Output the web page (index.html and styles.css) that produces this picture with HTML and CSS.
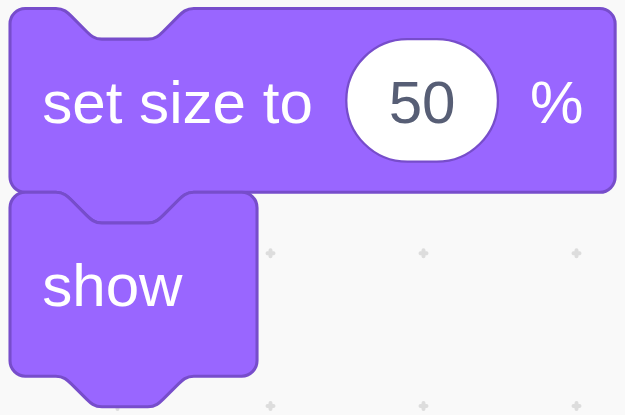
FILE: index.html
```html
<!DOCTYPE html>
<html>
<head>
<meta charset="utf-8">
<link rel="stylesheet" href="styles.css">
</head>
<body>
<div class="workspace">
  <svg class="canvas" width="625" height="415" viewBox="0 0 625 415" xmlns="http://www.w3.org/2000/svg">
    <g class="grid">
      <path d="M114.5 253.3h6M117.5 250.3v6"/>
      <path d="M267.5 253.3h6M270.5 250.3v6"/>
      <path d="M420.5 253.3h6M423.5 250.3v6"/>
      <path d="M573.5 253.3h6M576.5 250.3v6"/>
      <path d="M114.5 406h6M117.5 403v6"/>
      <path d="M267.5 406h6M270.5 403v6"/>
      <path d="M420.5 406h6M423.5 403v6"/>
      <path d="M573.5 406h6M576.5 403v6"/>
    </g>
    <g transform="translate(10 8.5) scale(3.83)">
      <g class="block">
        <path class="block-shape" d="M 0,4 A 4,4 0 0,1 4,0 H 12 c 2,0 3,1 4,2 l 4,4 c 1,1 2,2 4,2 h 12 c 2,0 3,-1 4,-2 l 4,-4 c 1,-1 2,-2 4,-2 H 154 a 4,4 0 0,1 4,4 V 44 a 4,4 0 0,1 -4,4 H 48 c -2,0 -3,1 -4,2 l -4,4 c -1,1 -2,2 -4,2 h -12 c -2,0 -3,-1 -4,-2 l -4,-4 c -1,-1 -2,-2 -4,-2 H 4 a 4,4 0 0,1 -4,-4 z"/>
        <text class="label" x="8.4" y="29.8">set size to</text>
        <rect class="field" x="87.8" y="8" width="39.6" height="32" rx="16" ry="16"/>
        <text class="field-text" x="107.6" y="29.8">50</text>
        <text class="label" x="135.8" y="29.8">%</text>
      </g>
      <g class="block" transform="translate(0 48)">
        <path class="block-shape" d="M 0,4 A 4,4 0 0,1 4,0 H 12 c 2,0 3,1 4,2 l 4,4 c 1,1 2,2 4,2 h 12 c 2,0 3,-1 4,-2 l 4,-4 c 1,-1 2,-2 4,-2 H 60.5 a 4,4 0 0,1 4,4 V 44 a 4,4 0 0,1 -4,4 H 48 c -2,0 -3,1 -4,2 l -4,4 c -1,1 -2,2 -4,2 h -12 c -2,0 -3,-1 -4,-2 l -4,-4 c -1,-1 -2,-2 -4,-2 H 4 a 4,4 0 0,1 -4,-4 z"/>
        <text class="label" x="8.4" y="29.8">show</text>
      </g>
    </g>
  </svg>
</div>
</body>
</html>
```
FILE: styles.css
```css
html, body {
  margin: 0;
  padding: 0;
  background: #f9f9f9;
}
.workspace {
  width: 625px;
  height: 415px;
  overflow: hidden;
  background: #f9f9f9;
}
.canvas {
  display: block;
}
.grid path {
  stroke: #dddddd;
  stroke-width: 4;
  stroke-linecap: round;
  fill: none;
}
.block-shape {
  fill: #9966ff;
  stroke: #774dcb;
  stroke-width: 0.8;
}
.label {
  font-family: "Liberation Sans", Arial, sans-serif;
  font-size: 15.7px;
  fill: #ffffff;
}
.field {
  fill: #ffffff;
  stroke: #774dcb;
  stroke-width: 0.6;
}
.field-text {
  font-family: "Liberation Sans", Arial, sans-serif;
  font-size: 15.7px;
  fill: #575e75;
  text-anchor: middle;
}
```
